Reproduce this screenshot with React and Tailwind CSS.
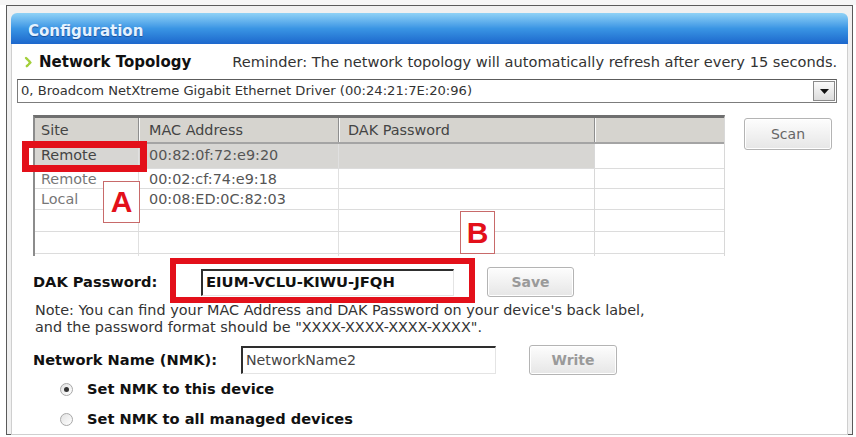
export default function App() {
  const rows = [
    { site: "Remote", mac: "00:82:0f:72:e9:20", sel: true, h: "h-[25px]" },
    { site: "Remote", mac: "00:02:cf:74:e9:18", h: "h-[20px]" },
    { site: "Local", mac: "00:08:ED:0C:82:03", h: "h-[21px]" },
    { site: "", mac: "", h: "h-[22px]" },
    { site: "", mac: "", h: "h-[22px]" },
    { site: "", mac: "", h: "h-[4px]" },
  ];
  const btn =
    "flex items-center justify-center rounded-[3px] border border-[#b4b4b4] bg-gradient-to-b from-[#fdfdfd] to-[#e6e6e6] shadow-[inset_0_0_0_1px_#ffffff]";
  return (
    <div className="relative w-[856px] h-[437px] overflow-hidden bg-white font-['DejaVu_Sans',sans-serif] text-[#333]">
      <div className="h-[5px] bg-[#f6f6f6]" />
      <div className="ml-[6px] w-[847px] h-[430px] border border-[#5a5a5a] bg-[#f0f0f0] px-[4px] pt-[7px] flex flex-col">
        {/* Title bar */}
        <div className="h-[31px] shrink-0 rounded-t-[6px] bg-gradient-to-b from-[#8fd2f6] via-[#3a95e4] to-[#1d67cc] flex items-center pl-[17px] pt-[5px]">
          <span className="text-[15px] font-bold text-[#e4f2ff] [text-shadow:0_1px_1px_#1a4f9a]">Configuration</span>
        </div>
        {/* Content */}
        <div className="flex-1 bg-white border-x border-b border-[#cfcfcf] flex flex-col">
          {/* Network topology row */}
          <div className="mt-[8px] h-[20px] flex items-center pl-[12px]">
            <svg width="9" height="13" viewBox="0 0 9 13" className="shrink-0">
              <path d="M2 2 L6.5 6.5 L2 11" fill="none" stroke="#a3cf3a" strokeWidth="2.4" strokeLinecap="round" strokeLinejoin="round" strokeDasharray="2 1.2" />
            </svg>
            <span className="ml-[6px] text-[15px] font-bold text-[#111]">Network Topology</span>
            <span className="ml-[41px] text-[14.6px] text-[#333] whitespace-nowrap">
              Reminder: The network topology will automatically refresh after every 15 seconds.
            </span>
          </div>
          {/* Dropdown */}
          <div className="mt-[7px] ml-[5px] w-[820px] h-[24px] border border-[#7c7c7c] border-t-[#5c5c5c] flex items-center">
            <span className="pl-[3px] flex-1 text-[13.1px] text-[#333] whitespace-nowrap">
              0, Broadcom NetXtreme Gigabit Ethernet Driver (00:24:21:7E:20:96)
            </span>
            <div className="mr-[1px] w-[22px] h-[20px] border border-[#8a8a8a] bg-gradient-to-b from-[#fafafa] to-[#dcdcdc] flex items-center justify-center">
              <svg width="9" height="5" viewBox="0 0 9 5">
                <path d="M0 0 H9 L4.5 5 Z" fill="#111" />
              </svg>
            </div>
          </div>
          {/* Table + Scan */}
          <div className="mt-[12px] ml-[21px] flex items-start">
            <div className="w-[692px] h-[141px] flex flex-col border-l-2 border-l-[#8c8c8c] border-t-[3px] border-t-[#6f6f6f] border-r border-r-[#d8d8d8] overflow-hidden">
              <div className="h-[26px] shrink-0 grid grid-cols-[104px_200px_256px_131px] bg-[#d6d4cf] border-b-2 border-b-[#a4a4a4] text-[14.4px] text-[#444]">
                <div className="pl-[6px] pt-[2px] flex items-center border-r border-r-[#8e8e8e] shadow-[1px_0_0_#fafafa]">Site</div>
                <div className="pl-[10px] pt-[2px] flex items-center border-r border-r-[#8e8e8e] shadow-[1px_0_0_#fafafa]">MAC Address</div>
                <div className="pl-[9px] pt-[2px] flex items-center border-r border-r-[#8e8e8e] shadow-[1px_0_0_#fafafa]">DAK Password</div>
                <div />
              </div>
              {rows.map((r, i) => (
                <div key={i} className={`${r.h} shrink-0 grid grid-cols-[104px_200px_256px_131px] border-b border-b-[#dcdcdc] text-[14.4px]`}>
                  <div className={`pl-[6px] flex items-center border-r border-r-[#e0e0e0] ${r.sel ? "bg-[#d7d6d3] text-[#444]" : "text-[#777]"}`}>{r.site}</div>
                  <div className={`pl-[10px] flex items-center border-r border-r-[#e0e0e0] text-[#555] ${r.sel ? "bg-[#d7d6d3]" : ""}`}>{r.mac}</div>
                  <div className={`border-r border-r-[#d8d8d8] ${r.sel ? "bg-[#d7d6d3]" : ""}`} />
                  <div />
                </div>
              ))}
            </div>
            <div className={`${btn} ml-[19px] mt-[3px] w-[88px] h-[32px] text-[14px] text-[#666]`}>Scan</div>
          </div>
          {/* DAK password row */}
          <div className="mt-[11px] h-[30px] flex items-center pl-[21px]">
            <span className="w-[168px] text-[14.6px] font-bold text-[#111] whitespace-nowrap">DAK Password:</span>
            <div className="w-[253px] h-[27px] border-t-2 border-l-2 border-t-[#2e2e2e] border-l-[#2e2e2e] border-b border-r border-b-[#e4e4e4] border-r-[#e4e4e4] flex items-center pl-[3px]">
              <span className="text-[14.8px] font-bold text-[#111] whitespace-nowrap">EIUM-VCLU-KIWU-JFQH</span>
            </div>
            <div className={`${btn} ml-[33px] w-[87px] h-[30px] text-[14px] font-bold text-[#9a9a9a]`}>Save</div>
          </div>
          {/* Note */}
          <div className="mt-[5px] pl-[23px] text-[14.4px] leading-[17px] text-[#333] whitespace-nowrap">
            <div>Note: You can find your MAC Address and DAK Password on your device's back label,</div>
            <div>and the password format should be "XXXX-XXXX-XXXX-XXXX".</div>
          </div>
          {/* NMK row */}
          <div className="mt-[10px] h-[28px] flex items-center pl-[21px]">
            <span className="w-[208px] text-[14.6px] font-bold text-[#111] whitespace-nowrap">Network Name (NMK):</span>
            <div className="w-[255px] h-[28px] border-t-2 border-l-2 border-t-[#2e2e2e] border-l-[#2e2e2e] border-b border-r border-b-[#e4e4e4] border-r-[#e4e4e4] flex items-center pl-[3px]">
              <span className="text-[14.2px] text-[#444]">NetworkName2</span>
            </div>
            <div className={`${btn} ml-[33px] w-[88px] h-[30px] text-[14px] font-bold text-[#9a9a9a]`}>Write</div>
          </div>
          {/* Radios */}
          <div className="flex flex-col pl-[48px]">
            <div className="h-[30px] flex items-center">
              <span className="w-[13px] h-[13px] rounded-full border border-[#a8a8a8] bg-gradient-to-br from-[#e2e2e2] to-white flex items-center justify-center">
                <span className="w-[5px] h-[5px] rounded-full bg-[#333]" />
              </span>
              <span className="ml-[14px] text-[14.6px] font-bold text-[#111]">Set NMK to this device</span>
            </div>
            <div className="h-[30px] flex items-center">
              <span className="w-[13px] h-[13px] rounded-full border border-[#a8a8a8] bg-gradient-to-br from-[#e2e2e2] to-white" />
              <span className="ml-[14px] text-[14.6px] font-bold text-[#111]">Set NMK to all managed devices</span>
            </div>
          </div>
        </div>
      </div>
      {/* Annotation overlays */}
      <div className="absolute left-[22px] top-[141px] w-[125px] h-[31px] border-[7px] border-[#e3101a]" />
      <div className="absolute left-[103px] top-[181px] w-[37px] h-[42px] border border-[#c86a6a] bg-white flex items-center justify-center">
        <span className="font-['Liberation_Sans',sans-serif] font-bold text-[30px] leading-none text-[#e3101a]">A</span>
      </div>
      <div className="absolute left-[460px] top-[211px] w-[35px] h-[43px] border border-[#c86a6a] bg-white flex items-center justify-center">
        <span className="font-['Liberation_Sans',sans-serif] font-bold text-[30px] leading-none text-[#e3101a]">B</span>
      </div>
      <div className="absolute left-[170px] top-[258px] w-[305px] h-[45px] border-[6px] border-[#e3101a]" />
    </div>
  );
}
